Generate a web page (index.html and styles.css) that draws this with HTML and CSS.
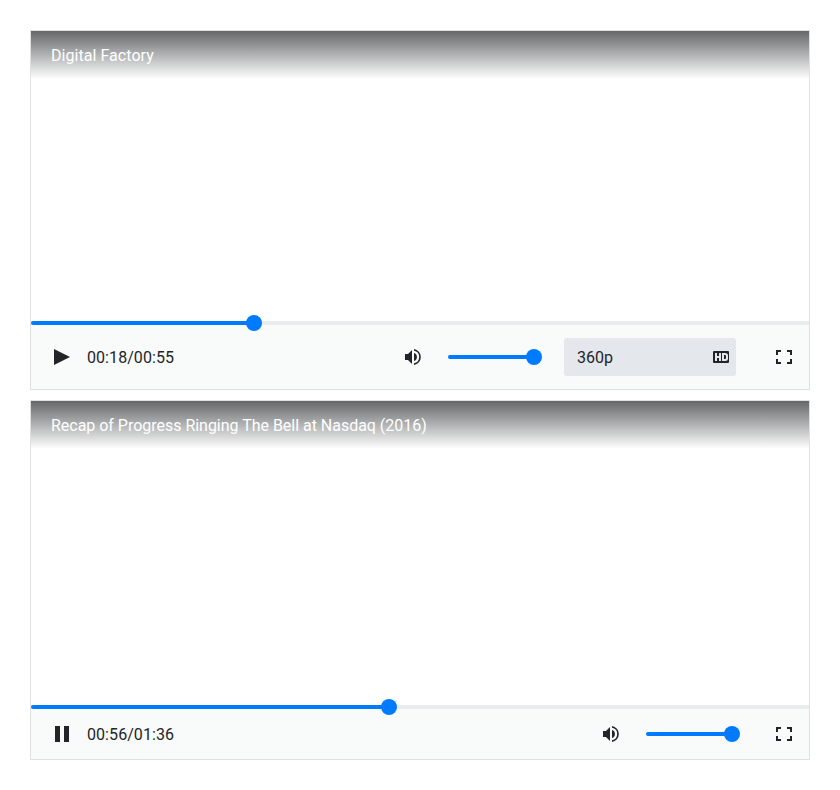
FILE: index.html
```html
<!DOCTYPE html>
<html lang="en">
<head>
<meta charset="utf-8">
<title>Media players</title>
<link rel="stylesheet" href="styles.css">
</head>
<body>
<svg class="defs" width="0" height="0">
  <symbol id="volume" viewBox="0 0 16 16">
    <path d="M0 5v6h3l4 4V1L3 5zM9 4v8a4.2 4.2 0 0 0 0-8zM9 0v1.8a6.3 6.3 0 0 1 0 12.4V16a8.1 8.1 0 0 0 0-16z"/>
  </symbol>
  <symbol id="fullscreen" viewBox="0 0 16 16">
    <path d="M0 1h5v2H2v3H0zM11 1h5v5h-2V3h-3zM0 10h2v3h3v2H0zM14 10h2v5h-5v-2h3z"/>
  </symbol>
</svg>
<main class="players">
  <section class="player">
    <header class="title title-short">Digital Factory</header>
    <div class="screen"></div>
    <div class="track seek"><div class="fill" style="width:223px"><span class="thumb"></span></div></div>
    <div class="controls tall">
      <svg class="icon" viewBox="0 0 16 16"><path d="M0 0l16 8-16 8z"/></svg>
      <span class="time">00:18/00:55</span>
      <svg class="icon volume-icon"><use href="#volume"/></svg>
      <div class="track volume"><div class="fill" style="width:86px"><span class="thumb"></span></div></div>
      <div class="quality">
        <span class="label">360p</span>
        <svg class="icon" viewBox="0 0 16 16"><path fill-rule="evenodd" d="M1 2h14q1 0 1 1v10q0 1-1 1H1q-1 0-1-1V3q0-1 1-1zM2 4v8h2V9h2v3h2V4H6v3H4V4zM9 4v8h3q3 0 3-2.5v-3Q15 4 12 4zM11 6h1q1 0 1 1v2q0 1-1 1h-1z"/></svg>
      </div>
      <svg class="icon fullscreen"><use href="#fullscreen"/></svg>
    </div>
  </section>
  <section class="player">
    <header class="title">Recap of Progress Ringing The Bell at Nasdaq (2016)</header>
    <div class="screen"></div>
    <div class="track seek"><div class="fill" style="width:358px"><span class="thumb"></span></div></div>
    <div class="controls">
      <svg class="icon" viewBox="0 0 16 16"><path d="M1 0h5v16H1zM10 0h5v16h-5z"/></svg>
      <span class="time">00:56/01:36</span>
      <svg class="icon volume-icon"><use href="#volume"/></svg>
      <div class="track volume"><div class="fill" style="width:86px"><span class="thumb"></span></div></div>
      <svg class="icon fullscreen"><use href="#fullscreen"/></svg>
    </div>
  </section>
</main>
</body>
</html>
```
FILE: styles.css
```css
* { box-sizing: border-box; }
body {
  margin: 0;
  padding: 30px;
  background: #fff;
  color: #212529;
  font: 16px/24px Roboto, sans-serif;
}
.defs { position: absolute; }
.players { display: grid; gap: 10px; }
.player {
  display: flex;
  flex-direction: column;
  height: 360px;
  border: 1px solid #dfe1e1;
}
.title {
  height: 48px;
  padding: 13px 20px 11px;
  color: #fff;
  letter-spacing: -0.02px;
  background: linear-gradient(#656769, #fff);
}
.title-short { letter-spacing: 0.05px; }
.screen { flex: 1; }
.track { height: 4px; background: #e9ecef; }
.fill {
  position: relative;
  height: 4px;
  border-radius: 2px;
  background: #007bff;
}
.thumb {
  position: absolute;
  top: -6px;
  right: -8px;
  width: 16px;
  height: 16px;
  border-radius: 50%;
  background: #007bff;
}
.controls {
  display: flex;
  align-items: center;
  height: 50px;
  padding: 0 17px 0 23px;
  background: #f9fafa;
}
.tall { height: 64px; }
.icon { flex: none; width: 16px; height: 16px; fill: #212529; }
.time { margin-left: 17px; padding-top: 2px; letter-spacing: 0.07px; }
.volume-icon { margin-left: auto; }
.volume { width: 86px; margin-left: 27px; border-radius: 2px; }
.quality {
  display: flex;
  align-items: center;
  justify-content: space-between;
  width: 172px;
  height: 38px;
  margin-left: 30px;
  padding: 0 7px 0 13px;
  border-radius: 3px;
  background: #e4e7eb;
}
.label { padding-top: 2px; }
.fullscreen { margin-left: 40px; }
.volume + .fullscreen { margin-left: 44px; }
```
